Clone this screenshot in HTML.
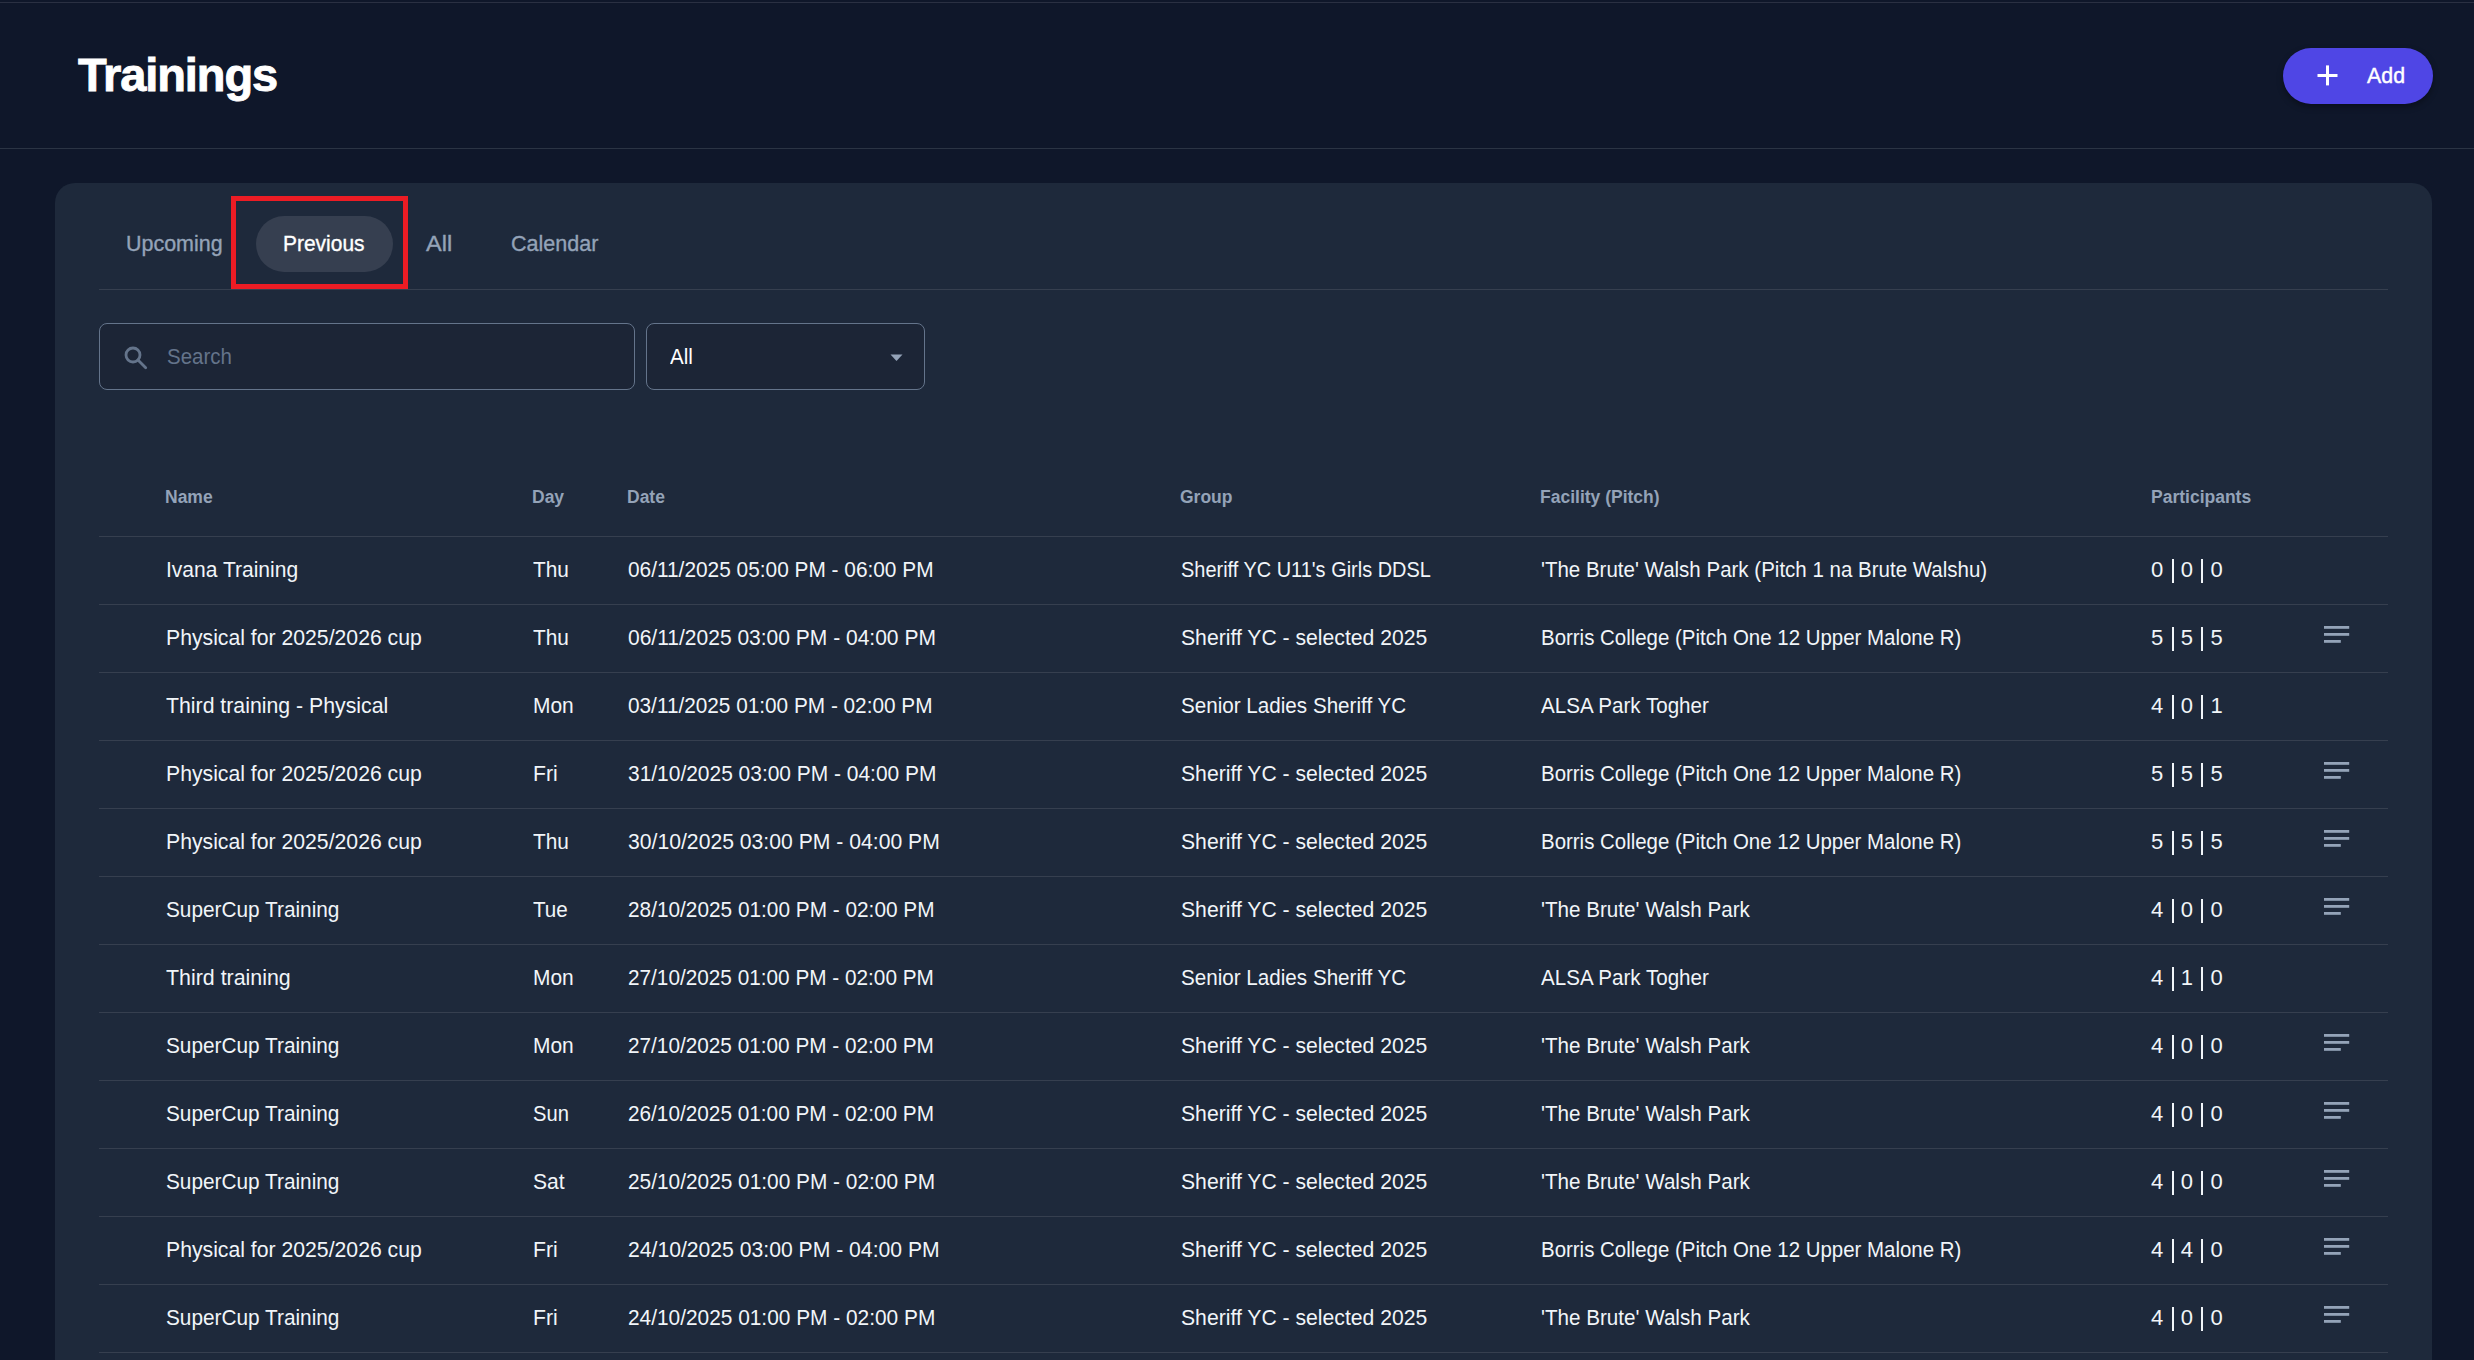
<!DOCTYPE html>
<html><head><meta charset="utf-8"><title>Trainings</title><style>
*{margin:0;padding:0;box-sizing:border-box}
html,body{width:2474px;height:1360px;overflow:hidden;background:#0f172a;font-family:"Liberation Sans",sans-serif;position:relative}
body>*{position:absolute}
.topline{left:0;top:2px;width:2474px;height:1px;background:#2a3042}
.title{left:78px;top:43px;font-size:47px;font-weight:bold;color:#fff;line-height:64px;letter-spacing:-1.1px;-webkit-text-stroke:0.9px #fff}
.addbtn{left:2283px;top:48px;width:150px;height:56px;border-radius:28px;background:#4f46e5;box-shadow:0 3px 6px rgba(0,0,0,.35)}
.plus{position:absolute;left:0;top:0}
.addtxt{position:absolute;left:84.2px;top:0;line-height:56px;font-size:22px;color:#fff;-webkit-text-stroke:0.4px #fff;transform-origin:0 50%;transform:scaleX(.9711)}
.hdrline{left:0;top:148px;width:2474px;height:1px;background:#2b3444}
.panel{left:55px;top:183px;width:2377px;height:1300px;border-radius:20px;background:#1e293b}
.tab{top:216px;line-height:56px;font-size:22px;color:#94a3b8;-webkit-text-stroke:0.35px #94a3b8;transform-origin:0 50%;white-space:nowrap}
.t1{left:126px;transform:scaleX(.9753)}
.pill{left:256px;top:216px;width:137px;height:56px;border-radius:28px;background:#363f50}
.t2{left:283px;color:#fff;-webkit-text-stroke:0.35px #fff;transform:scaleX(.9524)}
.t3{left:426px;transform:scaleX(1.0696)}
.t4{left:510.7px;transform:scaleX(.9787)}
.redbox{left:231px;top:196px;width:177px;height:93px;border:5px solid #ec1c24}
.tabline{left:99px;top:289px;width:2289px;height:1px;background:#363f4f}
.search{left:99px;top:323px;width:536px;height:67px;border:1.5px solid #64748b;border-radius:8px;background:#1c2536}
.sicon{left:123px;top:344.5px}
.ph{left:166.7px;top:323px;line-height:67px;font-size:22px;color:#64748b;transform-origin:0 50%;transform:scaleX(.9309)}
.sel{left:646px;top:323px;width:279px;height:67px;border:1.5px solid #64748b;border-radius:8px;background:#1c2536}
.seltxt{left:669.8px;top:323px;line-height:67px;font-size:22px;color:#fff;transform-origin:0 50%;transform:scaleX(.9348)}
.arrow{left:889.5px;top:353.5px}
.th{top:470px;line-height:54px;font-size:17.5px;font-weight:bold;color:#94a3b8}
.td{line-height:68px;font-size:22px;color:#f1f5f9;white-space:nowrap;transform-origin:0 50%}
.rline{left:99px;width:2289px;height:1px;background:#363f4f}
.icw{left:2324px;height:68px;width:26px}
.ic{position:absolute;left:0;top:22px}

.pd{position:absolute;line-height:68px;font-size:22px;color:#f1f5f9}
.pp{position:absolute;width:2px;height:24px;background:#f1f5f9}

</style></head><body>
<div class="topline"></div>
<div class="title">Trainings</div>
<div class="addbtn"><svg class="plus" width="150" height="56" viewBox="0 0 150 56"><rect x="43" y="17.4" width="3" height="20" fill="#fff"/><rect x="34.5" y="26" width="20" height="3" fill="#fff"/></svg><span class="addtxt">Add</span></div>
<div class="hdrline"></div>
<div class="panel"></div>
<div class="tab t1">Upcoming</div><div class="pill"></div><div class="tab t2">Previous</div><div class="tab t3">All</div><div class="tab t4">Calendar</div>
<div class="redbox"></div>
<div class="tabline"></div>
<div class="search"></div><svg class="sicon" width="30" height="30" viewBox="0 0 30 30"><circle cx="10" cy="10" r="7" fill="none" stroke="#64748b" stroke-width="2.8"/><line x1="15" y1="15" x2="22.7" y2="22.7" stroke="#64748b" stroke-width="2.8" stroke-linecap="round"/></svg><div class="ph">Search</div>
<div class="sel"></div><div class="seltxt">All</div><svg class="arrow" width="14" height="8" viewBox="0 0 14 8"><path d="M0.5 0.5 L12.5 0.5 L6.5 7 Z" fill="#94a3b8"/></svg>
<div class="th" style="left:165px">Name</div>
<div class="th" style="left:532px">Day</div>
<div class="th" style="left:627px">Date</div>
<div class="th" style="left:1180px">Group</div>
<div class="th" style="left:1540px">Facility (Pitch)</div>
<div class="th" style="left:2151px">Participants</div>
<div class="rline" style="top:536px"></div>
<div class="td" style="left:166px;top:536px;transform:scaleX(0.9562)">Ivana Training</div>
<div class="td" style="left:533px;top:536px;transform:scaleX(0.9459)">Thu</div>
<div class="td" style="left:628px;top:536px;transform:scaleX(0.9474)">06/11/2025 05:00 PM - 06:00 PM</div>
<div class="td" style="left:1181px;top:536px;transform:scaleX(0.9065)">Sheriff YC U11's Girls DDSL</div>
<div class="td" style="left:1541px;top:536px;transform:scaleX(0.932)">'The Brute' Walsh Park (Pitch 1 na Brute Walshu)</div>
<div class="pd" style="left:2151.10px;top:536px">0</div>
<div class="pp" style="left:2171.80px;top:558.5px"></div>
<div class="pd" style="left:2180.75px;top:536px">0</div>
<div class="pp" style="left:2200.90px;top:558.5px"></div>
<div class="pd" style="left:2210.40px;top:536px">0</div>
<div class="rline" style="top:604px"></div>
<div class="td" style="left:166px;top:604px;transform:scaleX(0.9638)">Physical for 2025/2026 cup</div>
<div class="td" style="left:533px;top:604px;transform:scaleX(0.9459)">Thu</div>
<div class="td" style="left:628px;top:604px;transform:scaleX(0.9548)">06/11/2025 03:00 PM - 04:00 PM</div>
<div class="td" style="left:1181px;top:604px;transform:scaleX(0.962)">Sheriff YC - selected 2025</div>
<div class="td" style="left:1541px;top:604px;transform:scaleX(0.929)">Borris College (Pitch One 12 Upper Malone R)</div>
<div class="pd" style="left:2151.10px;top:604px">5</div>
<div class="pp" style="left:2171.80px;top:626.5px"></div>
<div class="pd" style="left:2180.75px;top:604px">5</div>
<div class="pp" style="left:2200.90px;top:626.5px"></div>
<div class="pd" style="left:2210.40px;top:604px">5</div>
<div class="icw" style="top:604px"><svg class="ic" width="26" height="18" viewBox="0 0 26 18"><rect x="0" y="0" width="25.2" height="2.8" fill="#94a3b8"/><rect x="0" y="7" width="25.2" height="2.8" fill="#94a3b8"/><rect x="0" y="14" width="16.8" height="2.8" fill="#94a3b8"/></svg></div>
<div class="rline" style="top:672px"></div>
<div class="td" style="left:166px;top:672px;transform:scaleX(0.9668)">Third training - Physical</div>
<div class="td" style="left:533px;top:672px;transform:scaleX(0.9524)">Mon</div>
<div class="td" style="left:628px;top:672px;transform:scaleX(0.9442)">03/11/2025 01:00 PM - 02:00 PM</div>
<div class="td" style="left:1181px;top:672px;transform:scaleX(0.9377)">Senior Ladies Sheriff YC</div>
<div class="td" style="left:1541px;top:672px;transform:scaleX(0.9358)">ALSA Park Togher</div>
<div class="pd" style="left:2151.10px;top:672px">4</div>
<div class="pp" style="left:2171.80px;top:694.5px"></div>
<div class="pd" style="left:2180.75px;top:672px">0</div>
<div class="pp" style="left:2200.90px;top:694.5px"></div>
<div class="pd" style="left:2210.40px;top:672px">1</div>
<div class="rline" style="top:740px"></div>
<div class="td" style="left:166px;top:740px;transform:scaleX(0.9638)">Physical for 2025/2026 cup</div>
<div class="td" style="left:533px;top:740px;transform:scaleX(0.9625)">Fri</div>
<div class="td" style="left:628px;top:740px;transform:scaleX(0.9517)">31/10/2025 03:00 PM - 04:00 PM</div>
<div class="td" style="left:1181px;top:740px;transform:scaleX(0.962)">Sheriff YC - selected 2025</div>
<div class="td" style="left:1541px;top:740px;transform:scaleX(0.929)">Borris College (Pitch One 12 Upper Malone R)</div>
<div class="pd" style="left:2151.10px;top:740px">5</div>
<div class="pp" style="left:2171.80px;top:762.5px"></div>
<div class="pd" style="left:2180.75px;top:740px">5</div>
<div class="pp" style="left:2200.90px;top:762.5px"></div>
<div class="pd" style="left:2210.40px;top:740px">5</div>
<div class="icw" style="top:740px"><svg class="ic" width="26" height="18" viewBox="0 0 26 18"><rect x="0" y="0" width="25.2" height="2.8" fill="#94a3b8"/><rect x="0" y="7" width="25.2" height="2.8" fill="#94a3b8"/><rect x="0" y="14" width="16.8" height="2.8" fill="#94a3b8"/></svg></div>
<div class="rline" style="top:808px"></div>
<div class="td" style="left:166px;top:808px;transform:scaleX(0.9638)">Physical for 2025/2026 cup</div>
<div class="td" style="left:533px;top:808px;transform:scaleX(0.9459)">Thu</div>
<div class="td" style="left:628px;top:808px;transform:scaleX(0.9622)">30/10/2025 03:00 PM - 04:00 PM</div>
<div class="td" style="left:1181px;top:808px;transform:scaleX(0.962)">Sheriff YC - selected 2025</div>
<div class="td" style="left:1541px;top:808px;transform:scaleX(0.929)">Borris College (Pitch One 12 Upper Malone R)</div>
<div class="pd" style="left:2151.10px;top:808px">5</div>
<div class="pp" style="left:2171.80px;top:830.5px"></div>
<div class="pd" style="left:2180.75px;top:808px">5</div>
<div class="pp" style="left:2200.90px;top:830.5px"></div>
<div class="pd" style="left:2210.40px;top:808px">5</div>
<div class="icw" style="top:808px"><svg class="ic" width="26" height="18" viewBox="0 0 26 18"><rect x="0" y="0" width="25.2" height="2.8" fill="#94a3b8"/><rect x="0" y="7" width="25.2" height="2.8" fill="#94a3b8"/><rect x="0" y="14" width="16.8" height="2.8" fill="#94a3b8"/></svg></div>
<div class="rline" style="top:876px"></div>
<div class="td" style="left:166px;top:876px;transform:scaleX(0.9451)">SuperCup Training</div>
<div class="td" style="left:533px;top:876px;transform:scaleX(0.9361)">Tue</div>
<div class="td" style="left:628px;top:876px;transform:scaleX(0.9458)">28/10/2025 01:00 PM - 02:00 PM</div>
<div class="td" style="left:1181px;top:876px;transform:scaleX(0.962)">Sheriff YC - selected 2025</div>
<div class="td" style="left:1541px;top:876px;transform:scaleX(0.9377)">'The Brute' Walsh Park</div>
<div class="pd" style="left:2151.10px;top:876px">4</div>
<div class="pp" style="left:2171.80px;top:898.5px"></div>
<div class="pd" style="left:2180.75px;top:876px">0</div>
<div class="pp" style="left:2200.90px;top:898.5px"></div>
<div class="pd" style="left:2210.40px;top:876px">0</div>
<div class="icw" style="top:876px"><svg class="ic" width="26" height="18" viewBox="0 0 26 18"><rect x="0" y="0" width="25.2" height="2.8" fill="#94a3b8"/><rect x="0" y="7" width="25.2" height="2.8" fill="#94a3b8"/><rect x="0" y="14" width="16.8" height="2.8" fill="#94a3b8"/></svg></div>
<div class="rline" style="top:944px"></div>
<div class="td" style="left:166px;top:944px;transform:scaleX(0.9717)">Third training</div>
<div class="td" style="left:533px;top:944px;transform:scaleX(0.9524)">Mon</div>
<div class="td" style="left:628px;top:944px;transform:scaleX(0.9437)">27/10/2025 01:00 PM - 02:00 PM</div>
<div class="td" style="left:1181px;top:944px;transform:scaleX(0.9377)">Senior Ladies Sheriff YC</div>
<div class="td" style="left:1541px;top:944px;transform:scaleX(0.9358)">ALSA Park Togher</div>
<div class="pd" style="left:2151.10px;top:944px">4</div>
<div class="pp" style="left:2171.80px;top:966.5px"></div>
<div class="pd" style="left:2180.75px;top:944px">1</div>
<div class="pp" style="left:2200.90px;top:966.5px"></div>
<div class="pd" style="left:2210.40px;top:944px">0</div>
<div class="rline" style="top:1012px"></div>
<div class="td" style="left:166px;top:1012px;transform:scaleX(0.9451)">SuperCup Training</div>
<div class="td" style="left:533px;top:1012px;transform:scaleX(0.9524)">Mon</div>
<div class="td" style="left:628px;top:1012px;transform:scaleX(0.9437)">27/10/2025 01:00 PM - 02:00 PM</div>
<div class="td" style="left:1181px;top:1012px;transform:scaleX(0.962)">Sheriff YC - selected 2025</div>
<div class="td" style="left:1541px;top:1012px;transform:scaleX(0.9377)">'The Brute' Walsh Park</div>
<div class="pd" style="left:2151.10px;top:1012px">4</div>
<div class="pp" style="left:2171.80px;top:1034.5px"></div>
<div class="pd" style="left:2180.75px;top:1012px">0</div>
<div class="pp" style="left:2200.90px;top:1034.5px"></div>
<div class="pd" style="left:2210.40px;top:1012px">0</div>
<div class="icw" style="top:1012px"><svg class="ic" width="26" height="18" viewBox="0 0 26 18"><rect x="0" y="0" width="25.2" height="2.8" fill="#94a3b8"/><rect x="0" y="7" width="25.2" height="2.8" fill="#94a3b8"/><rect x="0" y="14" width="16.8" height="2.8" fill="#94a3b8"/></svg></div>
<div class="rline" style="top:1080px"></div>
<div class="td" style="left:166px;top:1080px;transform:scaleX(0.9451)">SuperCup Training</div>
<div class="td" style="left:533px;top:1080px;transform:scaleX(0.9158)">Sun</div>
<div class="td" style="left:628px;top:1080px;transform:scaleX(0.944)">26/10/2025 01:00 PM - 02:00 PM</div>
<div class="td" style="left:1181px;top:1080px;transform:scaleX(0.962)">Sheriff YC - selected 2025</div>
<div class="td" style="left:1541px;top:1080px;transform:scaleX(0.9377)">'The Brute' Walsh Park</div>
<div class="pd" style="left:2151.10px;top:1080px">4</div>
<div class="pp" style="left:2171.80px;top:1102.5px"></div>
<div class="pd" style="left:2180.75px;top:1080px">0</div>
<div class="pp" style="left:2200.90px;top:1102.5px"></div>
<div class="pd" style="left:2210.40px;top:1080px">0</div>
<div class="icw" style="top:1080px"><svg class="ic" width="26" height="18" viewBox="0 0 26 18"><rect x="0" y="0" width="25.2" height="2.8" fill="#94a3b8"/><rect x="0" y="7" width="25.2" height="2.8" fill="#94a3b8"/><rect x="0" y="14" width="16.8" height="2.8" fill="#94a3b8"/></svg></div>
<div class="rline" style="top:1148px"></div>
<div class="td" style="left:166px;top:1148px;transform:scaleX(0.9451)">SuperCup Training</div>
<div class="td" style="left:533px;top:1148px;transform:scaleX(0.9576)">Sat</div>
<div class="td" style="left:628px;top:1148px;transform:scaleX(0.9474)">25/10/2025 01:00 PM - 02:00 PM</div>
<div class="td" style="left:1181px;top:1148px;transform:scaleX(0.962)">Sheriff YC - selected 2025</div>
<div class="td" style="left:1541px;top:1148px;transform:scaleX(0.9377)">'The Brute' Walsh Park</div>
<div class="pd" style="left:2151.10px;top:1148px">4</div>
<div class="pp" style="left:2171.80px;top:1170.5px"></div>
<div class="pd" style="left:2180.75px;top:1148px">0</div>
<div class="pp" style="left:2200.90px;top:1170.5px"></div>
<div class="pd" style="left:2210.40px;top:1148px">0</div>
<div class="icw" style="top:1148px"><svg class="ic" width="26" height="18" viewBox="0 0 26 18"><rect x="0" y="0" width="25.2" height="2.8" fill="#94a3b8"/><rect x="0" y="7" width="25.2" height="2.8" fill="#94a3b8"/><rect x="0" y="14" width="16.8" height="2.8" fill="#94a3b8"/></svg></div>
<div class="rline" style="top:1216px"></div>
<div class="td" style="left:166px;top:1216px;transform:scaleX(0.9638)">Physical for 2025/2026 cup</div>
<div class="td" style="left:533px;top:1216px;transform:scaleX(0.9625)">Fri</div>
<div class="td" style="left:628px;top:1216px;transform:scaleX(0.9616)">24/10/2025 03:00 PM - 04:00 PM</div>
<div class="td" style="left:1181px;top:1216px;transform:scaleX(0.962)">Sheriff YC - selected 2025</div>
<div class="td" style="left:1541px;top:1216px;transform:scaleX(0.929)">Borris College (Pitch One 12 Upper Malone R)</div>
<div class="pd" style="left:2151.10px;top:1216px">4</div>
<div class="pp" style="left:2171.80px;top:1238.5px"></div>
<div class="pd" style="left:2180.75px;top:1216px">4</div>
<div class="pp" style="left:2200.90px;top:1238.5px"></div>
<div class="pd" style="left:2210.40px;top:1216px">0</div>
<div class="icw" style="top:1216px"><svg class="ic" width="26" height="18" viewBox="0 0 26 18"><rect x="0" y="0" width="25.2" height="2.8" fill="#94a3b8"/><rect x="0" y="7" width="25.2" height="2.8" fill="#94a3b8"/><rect x="0" y="14" width="16.8" height="2.8" fill="#94a3b8"/></svg></div>
<div class="rline" style="top:1284px"></div>
<div class="td" style="left:166px;top:1284px;transform:scaleX(0.9451)">SuperCup Training</div>
<div class="td" style="left:533px;top:1284px;transform:scaleX(0.9625)">Fri</div>
<div class="td" style="left:628px;top:1284px;transform:scaleX(0.948)">24/10/2025 01:00 PM - 02:00 PM</div>
<div class="td" style="left:1181px;top:1284px;transform:scaleX(0.962)">Sheriff YC - selected 2025</div>
<div class="td" style="left:1541px;top:1284px;transform:scaleX(0.9377)">'The Brute' Walsh Park</div>
<div class="pd" style="left:2151.10px;top:1284px">4</div>
<div class="pp" style="left:2171.80px;top:1306.5px"></div>
<div class="pd" style="left:2180.75px;top:1284px">0</div>
<div class="pp" style="left:2200.90px;top:1306.5px"></div>
<div class="pd" style="left:2210.40px;top:1284px">0</div>
<div class="icw" style="top:1284px"><svg class="ic" width="26" height="18" viewBox="0 0 26 18"><rect x="0" y="0" width="25.2" height="2.8" fill="#94a3b8"/><rect x="0" y="7" width="25.2" height="2.8" fill="#94a3b8"/><rect x="0" y="14" width="16.8" height="2.8" fill="#94a3b8"/></svg></div>
<div class="rline" style="top:1352px"></div>
</body></html>
